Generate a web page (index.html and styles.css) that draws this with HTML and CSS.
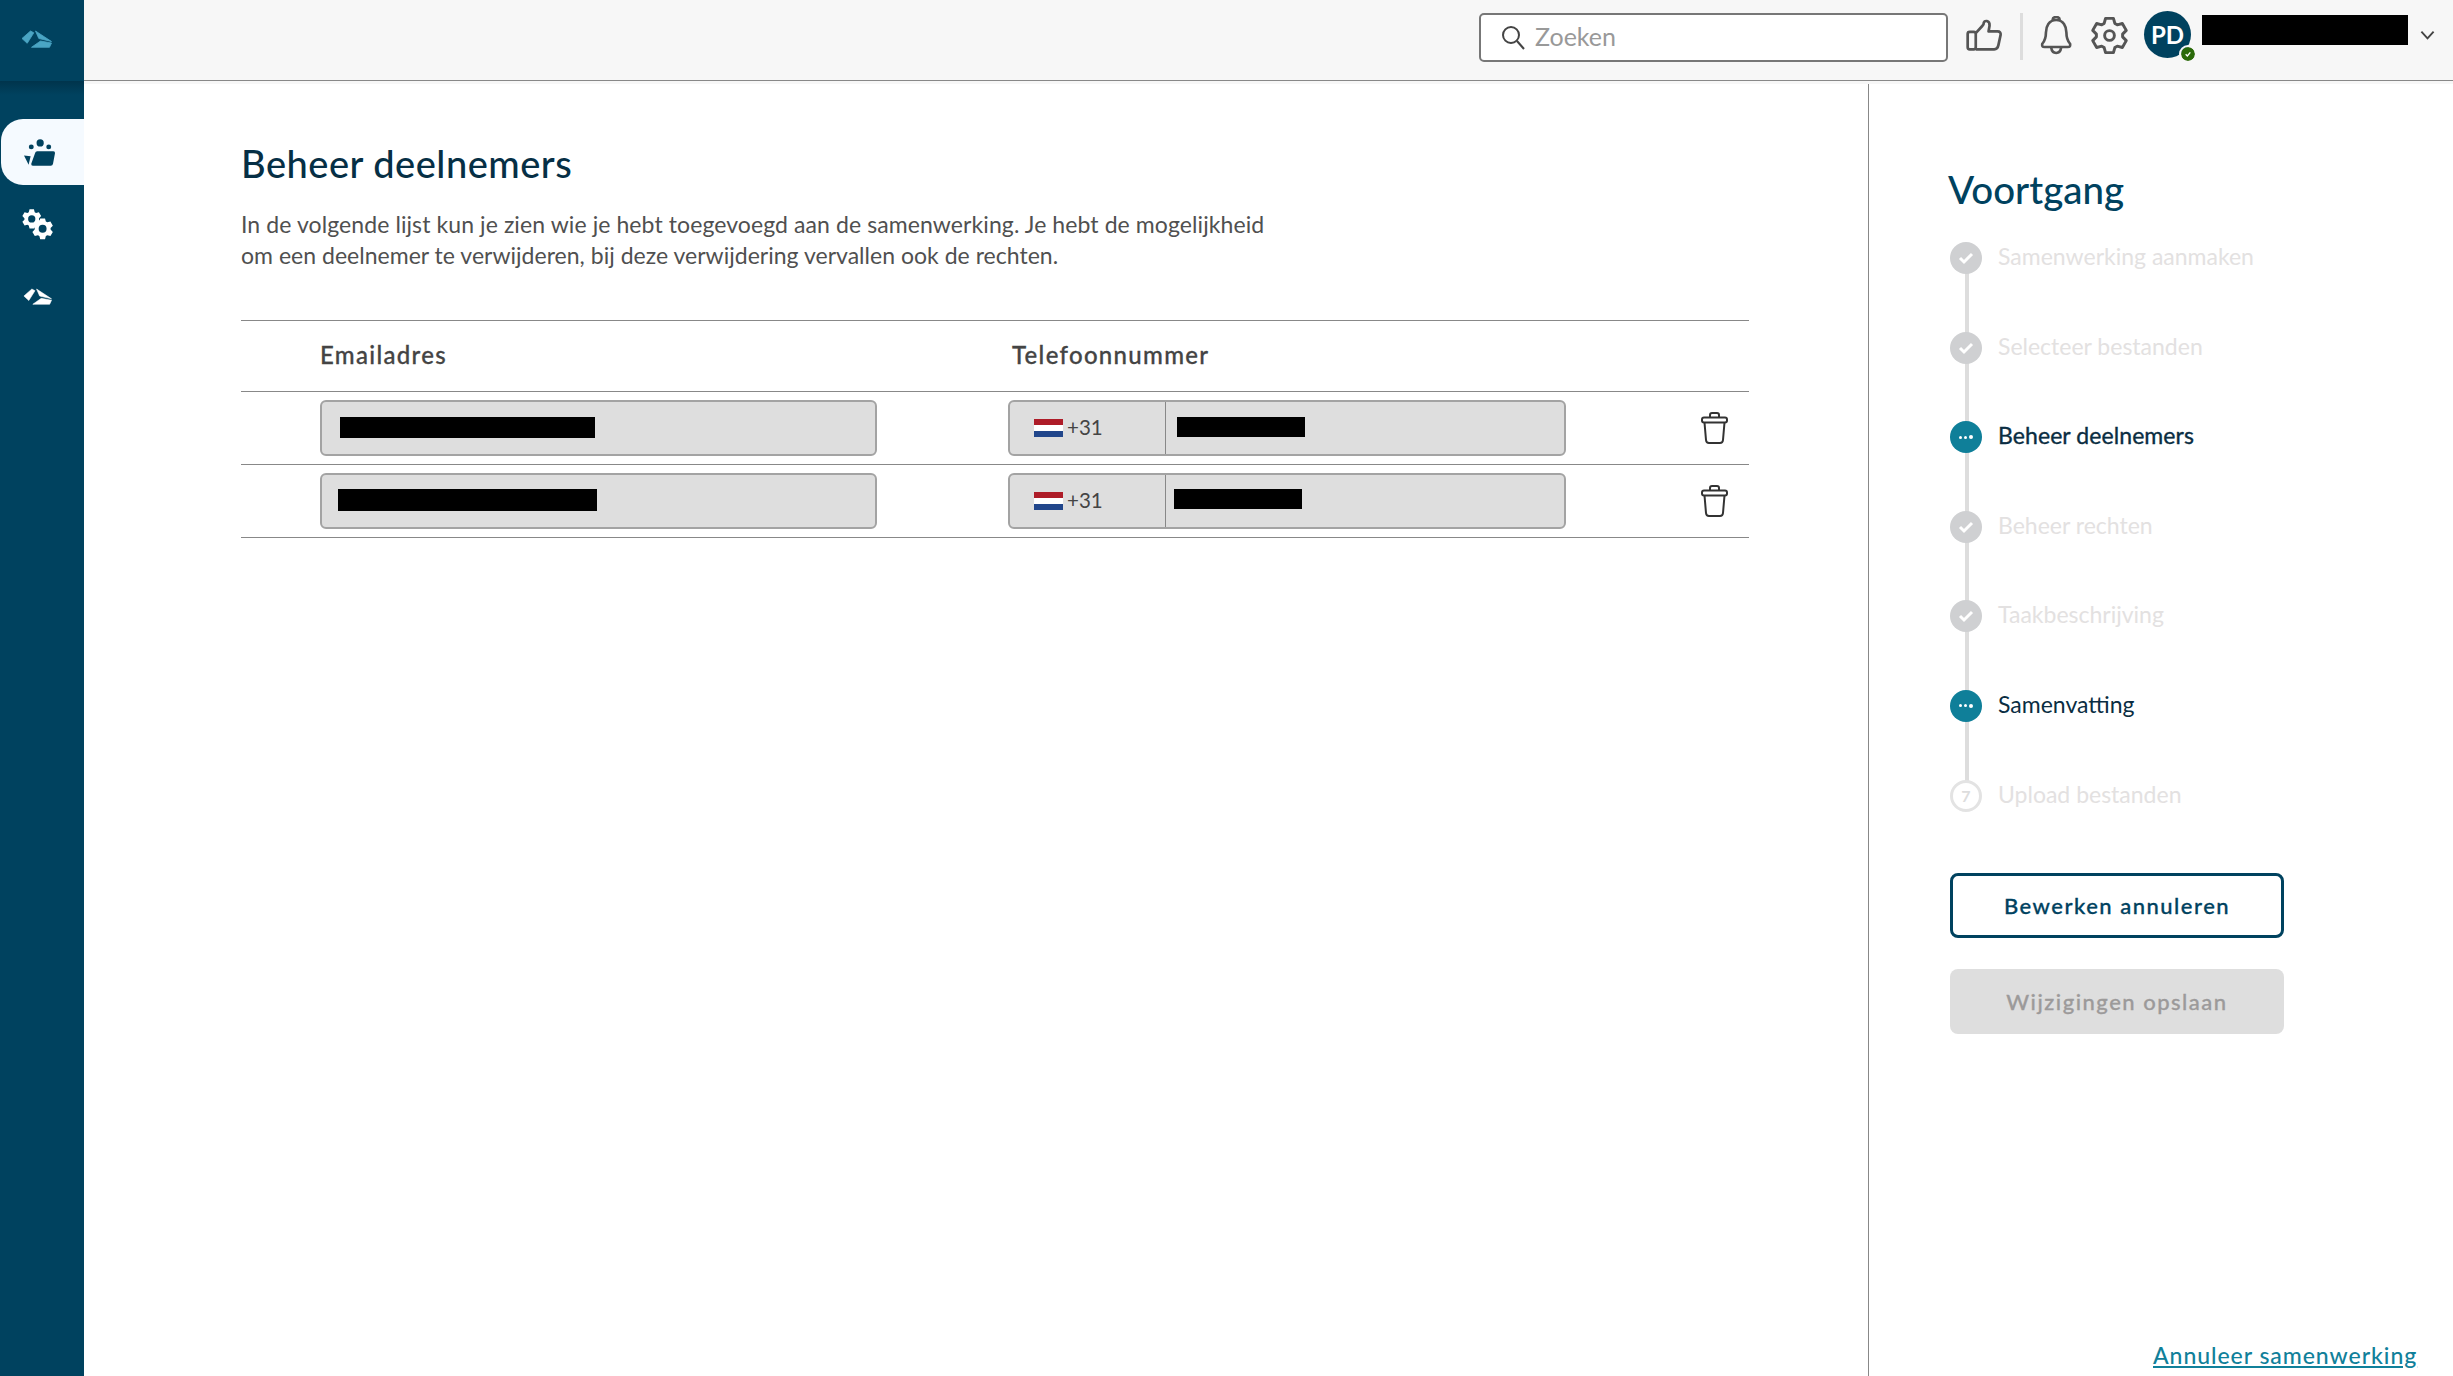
FILE: index.html
```html
<!DOCTYPE html>
<html lang="nl">
<head>
    <meta charset="UTF-8">
    <title>Beheer deelnemers</title>
    <link rel="stylesheet" href="styles.css">
</head>
<body>
    <svg class="defs" width="0" height="0">
        <symbol id="shards" viewBox="20.500 28.500 31 18">
            <polygon points="21.500,37 30,29.500 33.300,31.300 26.700,41.800"/>
            <polygon points="35,29.500 51,40 38.300,37"/>
            <polygon points="31,45.800 40,39.500 51,41.500 49,45.800"/>
        </symbol>
        <symbol id="cog" viewBox="-20 -20 40 40">
            <polygon points="-5.49,-12.33 -4.05,-17.54 4.05,-17.54 5.49,-12.33 7.94,-10.92 13.16,-12.28 17.21,-5.26 13.43,-1.41 13.43,1.41 17.21,5.26 13.16,12.28 7.94,10.92 5.49,12.33 4.05,17.54 -4.05,17.54 -5.49,12.33 -7.94,10.92 -13.16,12.28 -17.21,5.26 -13.43,1.41 -13.43,-1.41 -17.21,-5.26 -13.16,-12.28 -7.94,-10.92"/>
        </symbol>
        <symbol id="trash" viewBox="0 0 27 32">
            <path d="M9 5.500V3q0-2 2-2h5q2 0 2 2v2.500"/>
            <rect x="1" y="5.500" width="25" height="5" rx="2"/>
            <path d="M3.500 10.500 5 28q.3 3 3 3h11q2.700 0 3-3l1.500-17.500"/>
        </symbol>
    </svg>

    <aside class="sidebar">
        <div class="sidebar-logo">
            <svg class="icon-shards icon-shards-top"><use href="#shards"/></svg>
        </div>
        <nav class="sidebar-nav">
            <a class="nav-item nav-item-active">
                <svg class="icon-group" viewBox="70 412 100 88">
                    <circle cx="122" cy="427" r="11"/>
                    <circle cx="95" cy="439" r="7.500"/>
                    <circle cx="148" cy="439" r="7.500"/>
                    <polygon points="73,465 93,467 87,493"/>
                    <path d="M107 457q1-5 6-5h49q6 0 5 6l-6 32q-1 6-7 6H100q-6 0-5-6z"/>
                </svg>
            </a>
            <a class="nav-item">
                <svg class="icon-cogs" viewBox="64 626 96 94">
                    <g transform="translate(93 656)">
                        <use href="#cog" x="-33" y="-33" width="66" height="66" class="cog-solid"/>
                        <circle r="11" class="cog-hole"/>
                    </g>
                    <g transform="translate(126 686)">
                        <use href="#cog" x="-36" y="-36" width="72" height="72" class="cog-solid"/>
                        <circle r="12" class="cog-hole"/>
                    </g>
                </svg>
            </a>
            <a class="nav-item">
                <svg class="icon-shards icon-shards-nav"><use href="#shards"/></svg>
            </a>
        </nav>
    </aside>

    <div class="page">
        <header class="topbar">
            <div class="search">
                <svg class="search-icon" viewBox="0 0 24 25">
                    <circle cx="10" cy="10" r="8"/>
                    <path d="m16 16 7 8"/>
                </svg>
                <span class="search-text">Zoeken</span>
            </div>
            <svg class="top-icon icon-thumb" viewBox="48 50 110 98">
                <rect x="53" y="88" width="24" height="52" rx="6"/>
                <path d="M77 92 97 70q4-5 4-10 2-5 9-4 9 2 8 14l-3 17h27q10 0 9 10l-7 32q-2 11-12 11H77"/>
            </svg>
            <span class="top-divider"></span>
            <svg class="top-icon icon-bell" viewBox="270 40 100 118">
                <path d="M319 52c-22 0-31 20-31 38 0 18-4 26-11 34q-3 10 7 10h70q10 0 7-10c-7-8-11-16-11-34 0-18-9-38-31-38z"/>
                <path d="M308 52q1-9 11-9t11 9"/>
                <path d="M304 136q2 16 15 16t15-16"/>
            </svg>
            <svg class="top-icon icon-gear" viewBox="-20 -20 40 40">
                <use href="#cog" x="-20" y="-20" width="40" height="40"/>
                <circle r="5"/>
            </svg>
            <div class="avatar">
                PD
                <span class="avatar-status">
                    <svg viewBox="0 0 12 12"><path d="m2.500 6.500 2.500 2.500 4.500-5.500"/></svg>
                </span>
            </div>
            <span class="redacted redacted-name"></span>
            <svg class="chevron" viewBox="0 0 16 10"><path d="m1.500 1.500 6.500 7 6.500-7"/></svg>
        </header>

        <div class="content">
            <main class="main">
                <h1 class="title">Beheer deelnemers</h1>
                <p class="intro"><span class="intro-wide">In de volgende lijst kun je zien wie je hebt toegevoegd aan de samenwerking. Je hebt de mogelijkheid</span><br>om een deelnemer te verwijderen, bij deze verwijdering vervallen ook de rechten.</p>

                <div class="table">
                    <div class="row row-head">
                        <span class="col-email">Emailadres</span>
                        <span class="col-phone">Telefoonnummer</span>
                    </div>
                    <div class="row">
                        <div class="field field-email"><span class="redacted mail-one"></span></div>
                        <div class="field field-phone">
                            <div class="prefix"><span class="flag"></span><span class="prefix-code">+31</span></div>
                            <span class="redacted tel-one"></span>
                        </div>
                        <svg class="trash"><use href="#trash"/></svg>
                    </div>
                    <div class="row">
                        <div class="field field-email"><span class="redacted mail-two"></span></div>
                        <div class="field field-phone">
                            <div class="prefix"><span class="flag"></span><span class="prefix-code">+31</span></div>
                            <span class="redacted tel-two"></span>
                        </div>
                        <svg class="trash"><use href="#trash"/></svg>
                    </div>
                </div>
            </main>

            <aside class="progress">
                <h2 class="progress-title">Voortgang</h2>
                <ol class="steps">
                    <li class="step step-done"><span class="dot"><svg viewBox="0 0 16 14"><path d="m2 7 4 4 8-8"/></svg></span>Samenwerking aanmaken</li>
                    <li class="step step-done"><span class="dot"><svg viewBox="0 0 16 14"><path d="m2 7 4 4 8-8"/></svg></span>Selecteer bestanden</li>
                    <li class="step step-current step-strong"><span class="dot"><i></i><i></i><i></i></span>Beheer deelnemers</li>
                    <li class="step step-done"><span class="dot"><svg viewBox="0 0 16 14"><path d="m2 7 4 4 8-8"/></svg></span>Beheer rechten</li>
                    <li class="step step-done"><span class="dot"><svg viewBox="0 0 16 14"><path d="m2 7 4 4 8-8"/></svg></span>Taakbeschrijving</li>
                    <li class="step step-current"><span class="dot"><i></i><i></i><i></i></span>Samenvatting</li>
                    <li class="step step-todo"><span class="dot">7</span>Upload bestanden</li>
                </ol>
                <button class="btn btn-outline">Bewerken annuleren</button>
                <button class="btn btn-disabled">Wijzigingen opslaan</button>
                <a class="cancel-link">Annuleer samenwerking</a>
            </aside>
        </div>
    </div>
</body>
</html>
```

FILE: styles.css
```css
* {
    box-sizing: border-box;
}

html,
body {
    height: 100%;
    margin: 0;
}

body {
    display: flex;
    overflow: hidden;
    font-family: "Lato", Arial, sans-serif;
    font-size: 23px;
    color: #444;
    background-color: #fff;
}

.defs {
    position: absolute;
}

.redacted {
    display: block;
    background-color: #000;
}

/* sidebar */
.sidebar {
    display: flex;
    flex-direction: column;
    flex: 0 0 84px;
    background-color: #00425f;
}

.sidebar-logo {
    display: flex;
    align-items: center;
    justify-content: center;
    height: 81px;
}

.sidebar-nav {
    display: flex;
    flex-direction: column;
    flex: 1;
    gap: 6.500px;
    padding: 38px 0 0 1px;
    background: linear-gradient(#00344c, #00425f 14px);
}

.nav-item {
    display: flex;
    align-items: center;
    justify-content: center;
    height: 66px;
    border-radius: 22px 0 0 22px;
}

.nav-item-active {
    background-color: #f5faff;
}

.icon-shards {
    display: block;
    stroke-linejoin: round;
}

.icon-shards-top {
    width: 31px;
    height: 18px;
    margin: 0 11px 4px 0;
    fill: #4aa5c4;
    stroke: #4aa5c4;
    stroke-width: .8;
}

.icon-shards-nav {
    width: 29px;
    height: 17px;
    margin: 0 10px 2px 0;
    fill: #fff;
    stroke: #fff;
    stroke-width: .6;
}

.icon-group {
    width: 33px;
    height: 29px;
    margin-right: 7px;
    fill: #00425f;
}

.icon-cogs {
    width: 32px;
    height: 31px;
    margin-right: 10px;
}

.cog-solid {
    fill: #fff;
}

.cog-hole {
    fill: #00425f;
}

/* top bar */
.page {
    display: flex;
    flex-direction: column;
    flex: 1;
    min-width: 0;
}

.topbar {
    display: flex;
    align-items: center;
    flex: 0 0 81px;
    padding: 0 0 6px 1395px;
    background-color: #f7f7f7;
    border-bottom: 1px solid #888;
}

.search {
    display: flex;
    align-items: center;
    width: 469px;
    height: 49px;
    margin-top: 1px;
    padding-left: 20px;
    background-color: #fff;
    border: 2px solid #777;
    border-radius: 5px;
}

.search-icon {
    width: 24px;
    height: 25px;
    fill: none;
    stroke: #444;
    stroke-width: 2;
}

.search-text {
    margin: 0 0 3px 10px;
    font-size: 25px;
    color: #999;
}

.top-icon {
    fill: none;
    stroke: #555;
}

.icon-thumb {
    width: 37px;
    height: 33px;
    margin-left: 18px;
    margin-bottom: 3px;
    stroke-width: 8;
    stroke-linejoin: round;
}

.top-divider {
    width: 3px;
    height: 47px;
    margin: 0 17px 2px 17px;
    background-color: #ddd;
}

.icon-bell {
    width: 33px;
    height: 39px;
    margin-bottom: 4px;
    stroke-width: 8;
}

.icon-gear {
    width: 39px;
    height: 39px;
    margin-left: 17px;
    margin-bottom: 4px;
    stroke-width: 3;
    stroke-linejoin: round;
}

.avatar {
    position: relative;
    display: flex;
    align-items: center;
    justify-content: center;
    width: 47px;
    height: 47px;
    margin-left: 15px;
    margin-bottom: 5px;
    font-size: 24px;
    font-weight: 700;
    color: #fff;
    background-color: #00425f;
    border-radius: 50%;
}

.avatar-status {
    position: absolute;
    right: -6px;
    bottom: -5px;
    display: flex;
    width: 18px;
    height: 18px;
    padding: 3px;
    background-color: #2b6a0b;
    border: 2px solid #f7f7f7;
    border-radius: 50%;
    background-clip: padding-box;
}

.avatar-status svg {
    fill: none;
    stroke: #fff;
    stroke-width: 2;
}

.redacted-name {
    width: 206px;
    height: 30px;
    margin: 0 0 15px 11px;
}

.chevron {
    width: 15px;
    height: 10px;
    margin: 0 0 4px 12px;
    fill: none;
    stroke: #444;
    stroke-width: 2;
}

/* main column */
.content {
    display: flex;
    flex: 1;
    min-height: 0;
    border-top: 3px solid #f7f7f7;
}

.main {
    flex: 0 0 1784px;
    padding: 57px 0 0 157px;
}

.title {
    margin: 0;
    font-size: 38px;
    font-weight: 500;
    letter-spacing: .5px;
    line-height: 44px;
    color: #062f45;
}

.intro {
    margin: 24px 0 0;
    font-size: 23px;
    letter-spacing: .02px;
    line-height: 31px;
    color: #505050;
}

.intro-wide {
    letter-spacing: .09px;
}

.table {
    width: 1508px;
    margin-top: 49px;
    border-top: 1px solid #888;
}

.row {
    display: flex;
    align-items: center;
    height: 73px;
    padding: 0 21px 0 79px;
    border-bottom: 1px solid #888;
}

.row-head {
    height: 71px;
    padding-bottom: 3px;
    font-size: 24px;
    font-weight: 500;
    letter-spacing: 1.300px;
    color: #444;
    -webkit-text-stroke: .3px #444;
}

.col-email {
    width: 692px;
}

.field {
    display: flex;
    height: 56px;
    background-color: #dedede;
    border: 2px solid #a3a3a3;
    border-radius: 6px;
}

.field-email {
    align-items: center;
    width: 557px;
    margin-right: 131px;
}

.field-phone {
    align-items: center;
    width: 558px;
}

.prefix {
    display: flex;
    align-items: center;
    flex: 0 0 156px;
    height: 100%;
    padding-left: 24px;
    font-size: 20.500px;
    border-right: 1px solid #888;
}

.prefix-code {
    margin-bottom: 2px;
}

.flag {
    width: 29px;
    height: 18px;
    margin-right: 4px;
    background: linear-gradient(#ae1c28 33%, #fff 33%, #fff 67%, #21468b 67%);
}

.mail-one {
    width: 255px;
    height: 21px;
    margin: 0 0 2px 18px;
}

.mail-two {
    width: 259px;
    height: 22px;
    margin: 0 0 2px 16px;
}

.tel-one {
    width: 128px;
    height: 20px;
    margin: 0 0 2px 11px;
}

.tel-two {
    width: 128px;
    height: 20px;
    margin: 0 0 4px 8px;
}

.trash {
    width: 27px;
    height: 32px;
    margin-left: auto;
    fill: none;
    stroke: #333;
    stroke-width: 2;
}

/* progress panel */
.progress {
    display: flex;
    flex-direction: column;
    flex: 1;
    padding: 83px 0 0 79px;
    border-left: 1px solid #888;
}

.progress-title {
    margin: 0;
    font-size: 38.500px;
    font-weight: 500;
    line-height: 44px;
    color: #00425f;
}

.steps {
    margin: 31px 0 0 2px;
    padding: 0;
    list-style: none;
}

.step {
    position: relative;
    display: flex;
    align-items: flex-start;
    gap: 16px;
    height: 89.600px;
    font-size: 23px;
    line-height: 28px;
    color: #e3e1e1;
}

/* connector between two steps */
.step:not(:last-child)::after {
    content: "";
    position: absolute;
    left: 15px;
    top: 30px;
    width: 4px;
    height: 62px;
    background-color: #ddd;
}

.dot {
    position: relative;
    z-index: 1;
    display: flex;
    align-items: center;
    justify-content: center;
    gap: 2px;
    flex: 0 0 32px;
    height: 32px;
    border-radius: 50%;
}

.step-done .dot {
    background-color: #cfd0d2;
}

.step-done svg {
    width: 16px;
    height: 14px;
    fill: none;
    stroke: #fff;
    stroke-width: 3;
}

.step-current {
    color: #0a2d42;
}

.step-strong {
    -webkit-text-stroke: .35px #0a2d42;
    letter-spacing: .08px;
}

.step-current .dot {
    background-color: #0f7f99;
}

.dot i {
    width: 3px;
    height: 3px;
    background-color: #fff;
    border-radius: 50%;
}

.dot i:last-child {
    width: 4px;
    height: 4px;
}

.step-todo .dot {
    font-size: 16px;
    font-weight: 700;
    color: #ddd;
    background-color: #fff;
    border: 3px solid #e3e3e3;
}

.btn {
    width: 334px;
    height: 65px;
    margin-left: 2px;
    font-family: inherit;
    font-size: 22px;
    font-weight: 500;
    letter-spacing: 1.500px;
    border-radius: 8px;
    -webkit-text-stroke: .3px;
}

.btn-outline {
    margin-top: 4px;
    color: #00425f;
    background-color: #fff;
    border: 3px solid #00425f;
}

.btn-disabled {
    margin-top: 31px;
    color: #9c9a9a;
    background-color: #dedede;
    border: none;
}

.cancel-link {
    margin: auto 0 7px 205px;
    font-size: 23px;
    font-weight: 500;
    letter-spacing: .95px;
    line-height: 28px;
    color: #10809a;
    text-decoration: underline;
    white-space: nowrap;
}
```
